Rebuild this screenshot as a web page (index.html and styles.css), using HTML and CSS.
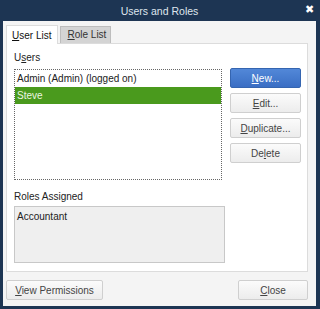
FILE: index.html
```html
<!DOCTYPE html>
<html lang="en">
<head>
    <meta charset="UTF-8">
    <title>Users and Roles</title>
    <link rel="stylesheet" href="styles.css">
</head>
<body>

<div class="window">
    <div class="titlebar">
        <span class="title">Users and Roles</span>
        <span class="close-x">&#10006;</span>
    </div>

    <div class="content">
        <!-- Tabs -->
        <div class="tabs">
            <div class="tab active"><u>U</u>ser List</div>
            <div class="tab"><u>R</u>ole List</div>
        </div>

        <div class="panel">
            <div class="label">U<u>s</u>ers</div>
            <div class="users-row">
                <div class="listbox">
                    <div class="item">Admin (Admin) (logged on)</div>
                    <div class="item selected">Steve</div>
                </div>
                <div class="side-buttons">
                    <button class="btn primary"><u>N</u>ew...</button>
                    <button class="btn"><u>E</u>dit...</button>
                    <button class="btn"><u>D</u>uplicate...</button>
                    <button class="btn">De<u>l</u>ete</button>
                </div>
            </div>

            <div class="label roles-label">Roles Assigned</div>
            <div class="roles-box">Accountant</div>
        </div>

        <!-- Footer -->
        <div class="footer">
            <button class="btn wide"><u>V</u>iew Permissions</button>
            <button class="btn close-btn"><u>C</u>lose</button>
        </div>
    </div>
</div>

</body>
</html>
```

FILE: styles.css
```css
body {
    margin: 0;
    padding: 0;
    font-family: "Liberation Sans", Arial, sans-serif;
    font-size: 10px;
    color: #222;
    background-color: #1d3553;
}

.window {
    width: 320px;
    height: 309px;
    box-sizing: border-box;
    background-color: #1d3553; /* dark navy frame */
    padding: 0 4px 3px 3px;
    display: flex;
    flex-direction: column;
}

.titlebar {
    height: 21px;
    display: flex;
    align-items: center;
    justify-content: center;
    position: relative;
    color: #dfe6ee;
    font-size: 10.5px;
}

.close-x {
    position: absolute;
    right: 2px;
    top: 3px;
    font-size: 11px;
    color: #fff;
}

.content {
    flex: 1;
    background-color: #f4f4f4;
    padding: 4px 8px 0 3px;
}

/* Tabs */
.tabs {
    display: flex;
    align-items: flex-end;
    height: 18px;
}

.tab {
    height: 16px;
    line-height: 16px;
    padding: 0 4px 0 6px;
    margin-right: 2px;
    background-color: #d4d4d4;
    border: 1px solid #bdbdbd;
    border-bottom: none;
    color: #333;
    font-size: 10px;
}

.tab.active {
    height: 18px;
    line-height: 19px;
    background-color: #fff;
    border-color: #dcdcdc;
    margin-bottom: -1px;
    padding: 0 6px 0 5px;
    position: relative;
    color: #111;
}

.panel {
    height: 229px;
    box-sizing: border-box;
    background-color: #fff;
    border: 1px solid #dcdcdc;
    padding: 8px 6px 0 7px;
}

.label {
    color: #222;
    height: 13px;
}

.users-row {
    display: flex;
    margin-top: 4px;
}

.listbox {
    width: 211px;
    height: 111px;
    box-sizing: border-box;
    border: 1px dotted #666;
}

.item {
    height: 17px;
    line-height: 17px;
    padding-left: 2px;
}

.item.selected {
    background-color: #4a9a1d;
    color: #eaf5e0;
}

.side-buttons {
    display: flex;
    flex-direction: column;
    gap: 5px;
    margin-left: 8px;
    margin-top: -1px;
}

.btn {
    width: 71px;
    height: 20px;
    padding: 0;
    font-family: "Liberation Sans", Arial, sans-serif;
    font-size: 10px;
    color: #444;
    background: linear-gradient(#fbfbfb, #ececec);
    border: 1px solid #cfcfcf;
    border-radius: 2px;
}

.btn.primary {
    background: linear-gradient(#5288d8, #3a6ec4);
    border-color: #3565b0;
    color: #fff;
}

.roles-label {
    margin-top: 11px;
}

.roles-box {
    width: 211px;
    height: 57px;
    box-sizing: border-box;
    margin-top: 2px;
    background-color: #efefef;
    border: 1px solid #c8c8c8;
    padding: 4px 2px;
}

/* Footer */
.footer {
    display: flex;
    justify-content: space-between;
    margin-top: 8px;
}

.btn.wide {
    width: 97px;
}

.btn.close-btn {
    width: 70px;
}
```
